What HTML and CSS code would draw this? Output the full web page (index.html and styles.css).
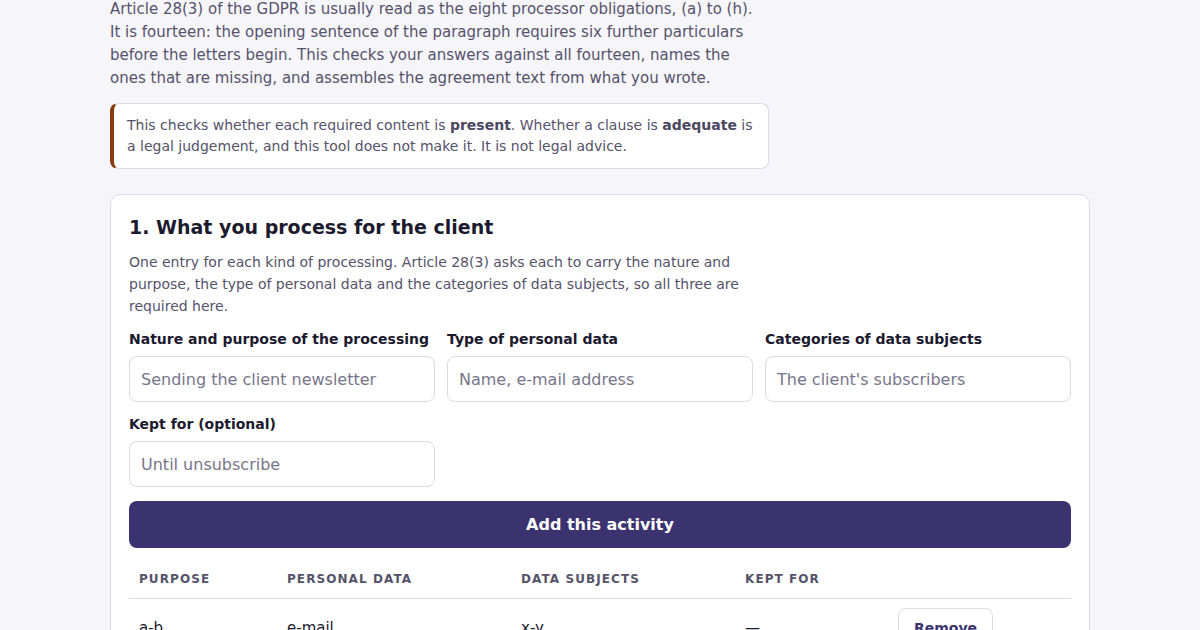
FILE: index.html
```html
<!DOCTYPE html>
<html lang="en">
<head>
<meta charset="utf-8">
<title>Article 28(3) checker</title>
<link rel="stylesheet" href="styles.css">
</head>
<body>
<main class="page">
  <p class="intro">Article 28(3) of the GDPR is usually read as the eight processor obligations, (a) to (h). It is fourteen: the opening sentence of the paragraph requires six further particulars before the letters begin. This checks your answers against all fourteen, names the ones that are missing, and assembles the agreement text from what you wrote.</p>
  <div class="note">This checks whether each required content is <strong>present</strong>. Whether a clause is <strong>adequate</strong> is a legal judgement, and this tool does not make it. It is not legal advice.</div>

  <section class="card">
    <h2 class="card-title">1. What you process for the client</h2>
    <p class="card-desc">One entry for each kind of processing. Article 28(3) asks each to carry the nature and purpose, the type of personal data and the categories of data subjects, so all three are required here.</p>
    <div class="fields">
      <label class="field">
        <span class="label">Nature and purpose of the processing</span>
        <input class="input" type="text" placeholder="Sending the client newsletter">
      </label>
      <label class="field">
        <span class="label">Type of personal data</span>
        <input class="input" type="text" placeholder="Name, e-mail address">
      </label>
      <label class="field">
        <span class="label">Categories of data subjects</span>
        <input class="input" type="text" placeholder="The client's subscribers">
      </label>
      <label class="field">
        <span class="label">Kept for (optional)</span>
        <input class="input" type="text" placeholder="Until unsubscribe">
      </label>
    </div>
    <button class="primary" type="button">Add this activity</button>
    <table class="table">
      <colgroup>
        <col class="c1"><col class="c2"><col class="c3"><col class="c4"><col class="c5">
      </colgroup>
      <thead>
        <tr><th>Purpose</th><th>Personal data</th><th>Data subjects</th><th>Kept for</th><th></th></tr>
      </thead>
      <tbody>
        <tr><td>a-b</td><td>e-mail</td><td>x-y</td><td>—</td><td><button class="ghost" type="button">Remove</button></td></tr>
      </tbody>
    </table>
  </section>
</main>
</body>
</html>
```

FILE: styles.css
```css
* { box-sizing: border-box; }
html, body { margin: 0; padding: 0; }
body {
  background: #f6f5fa;
  font-family: "DejaVu Sans", "Liberation Sans", sans-serif;
  color: #1c1a2e;
}
.page {
  width: 980px;
  margin: 0 auto;
}
.intro {
  max-width: 650px;
  margin: -2px 0 0;
  font-size: 15px;
  line-height: 23px;
  color: #55526a;
}
.note {
  max-width: 659px;
  margin-top: 13px;
  background: #fff;
  border: 1px solid #dcd9e8;
  border-left: 4px solid #8a3b12;
  border-radius: 8px;
  padding: 11px 14px 11px 13px;
  font-size: 14px;
  line-height: 21px;
  color: #55526a;
}
.note strong { color: #4a475e; }
.card {
  margin-top: 25px;
  background: #fff;
  border: 1px solid #dcd9e8;
  border-radius: 10px;
  padding: 18px 18px 40px;
}
.card-title {
  margin: 0;
  font-size: 19px;
  line-height: 28px;
  font-weight: bold;
  color: #1c1a2e;
}
.card-desc {
  max-width: 620px;
  margin: 10px 0 0;
  font-size: 14px;
  line-height: 22px;
  color: #55526a;
}
.fields {
  margin-top: 12px;
  display: grid;
  grid-template-columns: repeat(3, 1fr);
  gap: 12px;
}
.field {
  display: flex;
  flex-direction: column;
  gap: 7px;
}
.label {
  font-size: 14px;
  line-height: 20px;
  font-weight: bold;
  color: #1c1a2e;
}
.input {
  height: 46px;
  border: 1px solid #dcd9e8;
  border-radius: 8px;
  padding: 0 11px;
  font-family: inherit;
  font-size: 16px;
  color: #1c1a2e;
  background: #fff;
}
.input::placeholder { color: #77758a; }
.primary {
  display: block;
  width: 100%;
  margin-top: 14px;
  height: 47px;
  border: 0;
  border-radius: 8px;
  background: #3b3270;
  color: #fff;
  font-family: inherit;
  font-size: 16px;
  font-weight: bold;
}
.table {
  width: 100%;
  margin-top: 10px;
  border-collapse: collapse;
  table-layout: fixed;
}
.c1 { width: 148px; }
.c2 { width: 234px; }
.c3 { width: 224px; }
.c4 { width: 153px; }
.c5 { width: auto; }
.table th {
  text-align: left;
  font-size: 12px;
  line-height: 16px;
  letter-spacing: 0.09em;
  text-transform: uppercase;
  font-weight: bold;
  color: #55526a;
  padding: 13px 10px 11px;
  border-bottom: 1px solid #dcd9e8;
}
.table td {
  padding: 9px 10px;
  font-size: 15px;
  line-height: 22px;
  color: #1c1a2e;
  vertical-align: middle;
}
.ghost {
  height: 40px;
  padding: 0 15px;
  border: 1px solid #dcd9e8;
  border-radius: 8px;
  background: #fff;
  color: #3b3270;
  font-family: inherit;
  font-size: 14px;
  font-weight: bold;
}
```
